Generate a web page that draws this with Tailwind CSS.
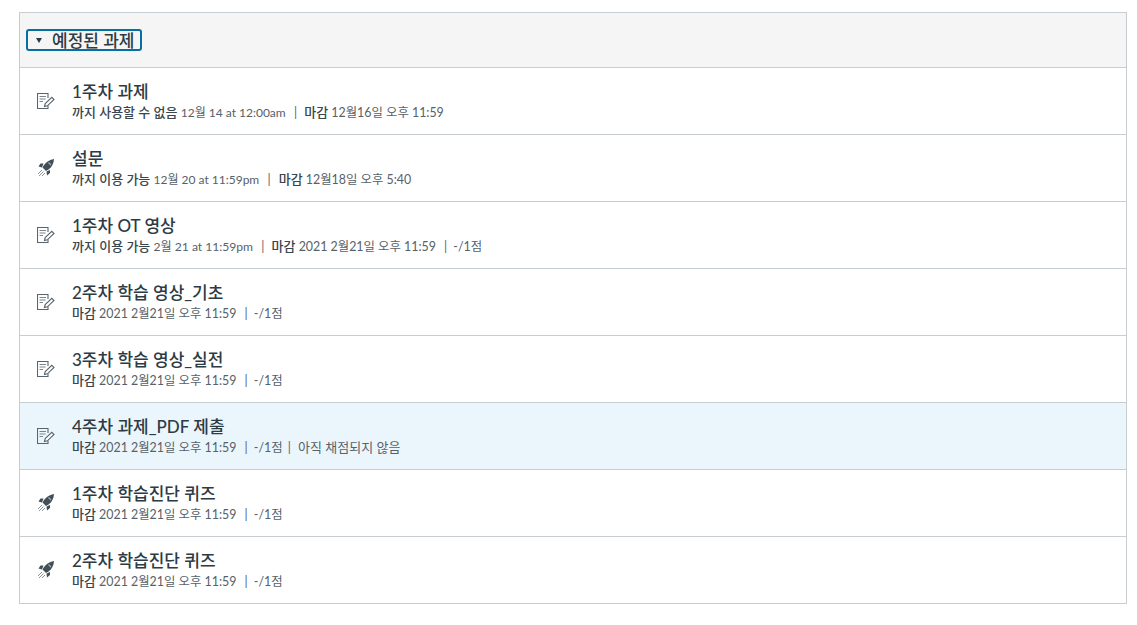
<!DOCTYPE html>
<html lang="ko">
<head>
  <meta charset="UTF-8">
  <title>예정된 과제</title>
  <script src="https://cdn.jsdelivr.net/npm/@tailwindcss/browser@4"></script>
</head>
<body class="bg-white font-['Lato','Noto_Sans_CJK_KR',sans-serif] text-[#2d3b45]">
  <svg class="hidden">
    <symbol id="assign" viewBox="0 0 18 18">
      <path d="M11 6V1.5H.5v15H11v-3" fill="none" stroke="#59646c" stroke-width="1.1"/>
      <path d="M2.5 4.5h6.5M2.5 7h6M2.5 9.5h3.5" fill="none" stroke="#7b858c" stroke-width="1.1"/>
      <path d="M7.5 14.5l.7-2.9 6.6-6.3 2.2 2.2-6.6 6.3z" fill="#fff" stroke="#59646c" stroke-width="1.1"/>
    </symbol>
    <symbol id="quiz" viewBox="0 0 18 18">
      <path d="M17 0C13 .5 9.5 2.5 7 6L5.5 8.5 9 12l2.5-1.500C15 8 16.700 4.500 17 0z" fill="#434f57"/>
      <path d="M6.500 4.500H3.500l-2 3 3.500 1zM13 11v3l-3 2.500-.5-4z" fill="#434f57"/>
      <path d="M11.500 3.500l2.500 2.500" stroke="#a5adb2" stroke-width="1.200"/>
      <path d="M5 11l-4 4M6.500 12.500L2 17M8 14l-3 3" stroke="#8b949a" stroke-width="1"/>
    </symbol>
  </svg>

  <div class="ml-[19px] mt-3 w-[1108px] border border-[#c7cdd1]">
    <!-- Header -->
    <div class="h-[54px] bg-[#f5f5f5] flex items-center pl-[6px]">
      <div class="h-[22px] w-[116px] border-2 border-[#0770a3] rounded-[3px] flex items-center pl-2 text-[17px] font-medium leading-none">
        <span class="w-0 h-0 border-x-[3.5px] border-x-transparent border-t-[5px] border-t-[#2d3b45]"></span>
        <span class="ml-[10px]">예정된 과제</span>
      </div>
    </div>

    <!-- Rows -->
    <div class="h-[67px] border-t border-[#c7cdd1] flex items-center">
      <svg class="w-[18px] h-[18px] ml-[17px] mr-[17px]"><use href="#assign"/></svg>
      <div>
        <div class="text-[17px] leading-[24px] font-medium">1주차 과제</div>
        <div class="text-[12.4px] leading-5 -mt-[2px] text-[#566169]"><b class="text-[13px] font-medium text-[#3a464e]">까지 사용할 수 없음</b> <span class="text-[12px]">12월 14 at 12:00am</span> <span class="ml-[5px] mr-[4px]">|</span> <b class="text-[13px] font-medium text-[#3a464e]">마감</b> 12월16일 오후 11:59</div>
      </div>
    </div>
    <div class="h-[67px] border-t border-[#c7cdd1] flex items-center">
      <svg class="w-[18px] h-[18px] ml-[17px] mr-[17px]"><use href="#quiz"/></svg>
      <div>
        <div class="text-[17px] leading-[24px] font-medium">설문</div>
        <div class="text-[12.4px] leading-5 -mt-[2px] text-[#566169]"><b class="text-[13px] font-medium text-[#3a464e]">까지 이용 가능</b> <span class="text-[12px]">12월 20 at 11:59pm</span> <span class="ml-[5px] mr-[5px]">|</span> <b class="text-[13px] font-medium text-[#3a464e]">마감</b> 12월18일 오후 5:40</div>
      </div>
    </div>
    <div class="h-[67px] border-t border-[#c7cdd1] flex items-center">
      <svg class="w-[18px] h-[18px] ml-[17px] mr-[17px]"><use href="#assign"/></svg>
      <div>
        <div class="text-[17px] leading-[24px] font-medium">1주차 OT 영상</div>
        <div class="text-[12.4px] leading-5 -mt-[2px] text-[#566169]"><b class="text-[13px] font-medium text-[#3a464e]">까지 이용 가능</b> <span class="text-[12.1px]">2월 21 at 11:59pm</span> <span class="ml-[5px] mr-[4px]">|</span> <b class="text-[13px] font-medium text-[#3a464e]">마감</b> 2021 2월21일 오후 11:59 <span class="ml-[5px] mr-[3px]">|</span> -/1점</div>
      </div>
    </div>
    <div class="h-[67px] border-t border-[#c7cdd1] flex items-center">
      <svg class="w-[18px] h-[18px] ml-[17px] mr-[17px]"><use href="#assign"/></svg>
      <div>
        <div class="text-[17px] leading-[24px] font-medium">2주차 학습 영상_기초</div>
        <div class="text-[12.4px] leading-5 -mt-[2px] text-[#566169]"><b class="text-[13px] font-medium text-[#3a464e]">마감</b> 2021 2월21일 오후 11:59 <span class="ml-[5px] mr-[3px]">|</span> -/1점</div>
      </div>
    </div>
    <div class="h-[67px] border-t border-[#c7cdd1] flex items-center">
      <svg class="w-[18px] h-[18px] ml-[17px] mr-[17px]"><use href="#assign"/></svg>
      <div>
        <div class="text-[17px] leading-[24px] font-medium">3주차 학습 영상_실전</div>
        <div class="text-[12.4px] leading-5 -mt-[2px] text-[#566169]"><b class="text-[13px] font-medium text-[#3a464e]">마감</b> 2021 2월21일 오후 11:59 <span class="ml-[5px] mr-[3px]">|</span> -/1점</div>
      </div>
    </div>
    <div class="h-[67px] border-t border-[#c7cdd1] bg-[#ebf6fc] flex items-center">
      <svg class="w-[18px] h-[18px] ml-[17px] mr-[17px]"><use href="#assign"/></svg>
      <div>
        <div class="text-[17px] leading-[24px] font-medium">4주차 과제_PDF 제출</div>
        <div class="text-[12.4px] leading-5 -mt-[2px] text-[#566169]"><b class="text-[13px] font-medium text-[#3a464e]">마감</b> 2021 2월21일 오후 11:59 <span class="ml-[5px] mr-[3px]">|</span> -/1점 <span class="ml-[2px] mr-[4px]">|</span> <span class="text-[13px]">아직 채점되지 않음</span></div>
      </div>
    </div>
    <div class="h-[67px] border-t border-[#c7cdd1] flex items-center">
      <svg class="w-[18px] h-[18px] ml-[17px] mr-[17px]"><use href="#quiz"/></svg>
      <div>
        <div class="text-[17px] leading-[24px] font-medium">1주차 학습진단 퀴즈</div>
        <div class="text-[12.4px] leading-5 -mt-[2px] text-[#566169]"><b class="text-[13px] font-medium text-[#3a464e]">마감</b> 2021 2월21일 오후 11:59 <span class="ml-[5px] mr-[3px]">|</span> -/1점</div>
      </div>
    </div>
    <div class="h-[67px] border-t border-[#c7cdd1] flex items-center">
      <svg class="w-[18px] h-[18px] ml-[17px] mr-[17px]"><use href="#quiz"/></svg>
      <div>
        <div class="text-[17px] leading-[24px] font-medium">2주차 학습진단 퀴즈</div>
        <div class="text-[12.4px] leading-5 -mt-[2px] text-[#566169]"><b class="text-[13px] font-medium text-[#3a464e]">마감</b> 2021 2월21일 오후 11:59 <span class="ml-[5px] mr-[3px]">|</span> -/1점</div>
      </div>
    </div>
  </div>
</body>
</html>
